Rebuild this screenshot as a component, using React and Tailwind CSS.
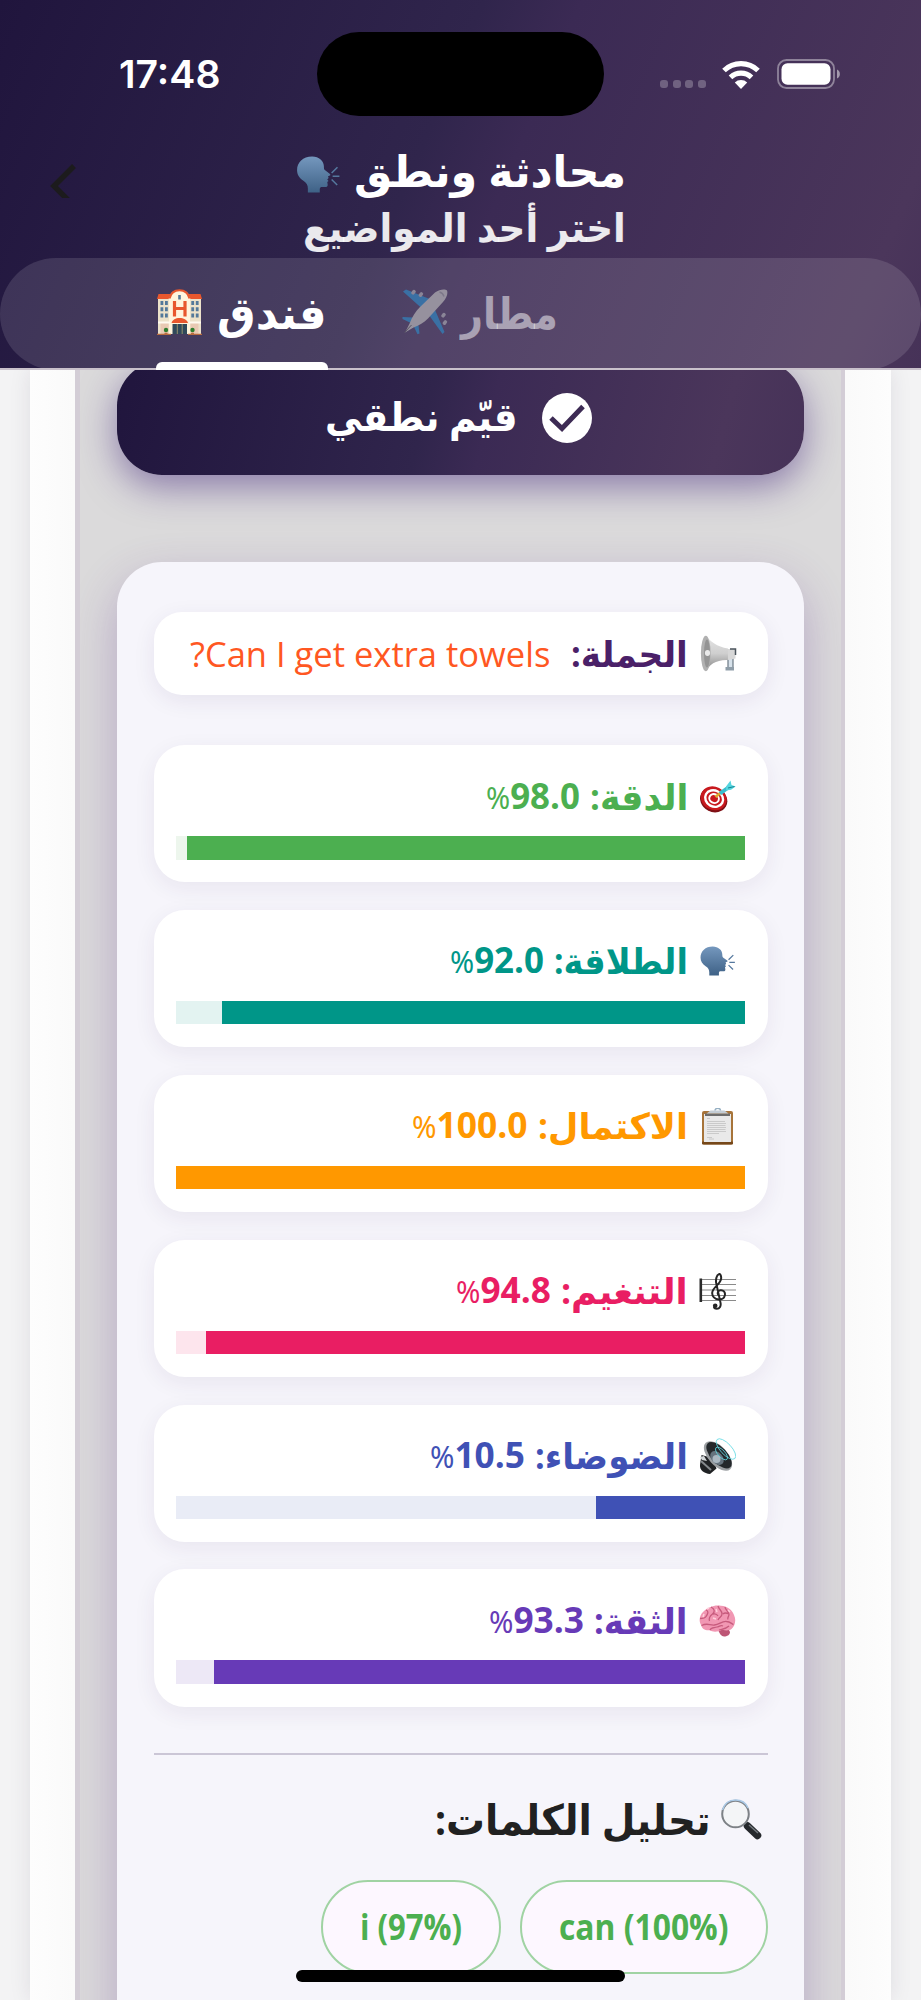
import { useLayoutEffect, useRef } from 'react';
import clsx from 'clsx';

const scores = [
  { icon: 'target', label: 'الدقة:', value: '98.0', labelWidth: 98, valueWidth: 94, fill: 98, text: 'text-[#4caf50]', bar: 'bg-[#4caf50]', track: 'bg-[#edf6ed]' },
  { icon: 'speak', label: 'الطلاقة:', value: '92.0', labelWidth: 134, valueWidth: 94, fill: 92, text: 'text-[#009688]', bar: 'bg-[#009688]', track: 'bg-[#e3f3f1]' },
  { icon: 'clipboard', label: 'الاكتمال:', value: '100.0', labelWidth: 150, valueWidth: 116, fill: 100, text: 'text-[#ff9800]', bar: 'bg-[#ff9800]', track: 'bg-[#fff3e0]' },
  { icon: 'music', label: 'التنغيم:', value: '94.8', labelWidth: 127, valueWidth: 95, fill: 94.8, text: 'text-[#e91e63]', bar: 'bg-[#e91e63]', track: 'bg-[#fde5ed]' },
  { icon: 'speaker', label: 'الضوضاء:', value: '10.5', labelWidth: 153, valueWidth: 95, fill: 26.2, text: 'text-[#3f51b5]', bar: 'bg-[#3f51b5]', track: 'bg-[#e9ecf6]' },
  { icon: 'brain', label: 'الثقة:', value: '93.3', labelWidth: 94, valueWidth: 95, fill: 93.3, text: 'text-[#673ab7]', bar: 'bg-[#673ab7]', track: 'bg-[#ede8f6]' },
];

// Squeezes or stretches one line of text to the given width
const FitText = ({ width, dir = 'rtl', className, children }) => {
  const ref = useRef(null);

  useLayoutEffect(() => {
    const el = ref.current;
    el.style.transform = `scaleX(${width / el.offsetWidth})`;
  }, [width, children]);

  return (
    <span dir={dir} className={clsx('block shrink-0 whitespace-nowrap', className)} style={{ width }}>
      <span
        ref={ref}
        className={clsx('inline-block', dir === 'rtl' ? 'origin-right' : 'origin-left')}
      >
        {children}
      </span>
    </span>
  );
};

const SpeakIcon = ({ className }) => (
  <svg viewBox="0 0 44 38" className={className}>
    <defs>
      <linearGradient id="head" x1="0" y1="0" x2="0" y2="1">
        <stop offset="0" stopColor="#7598be" />
        <stop offset="1" stopColor="#3e6186" />
      </linearGradient>
    </defs>
    <path
      fill="url(#head)"
      d="M16 .5C6.500.5.500 6.500.500 14.500c0 5 2.500 8.500 6.500 11 3.500 2.300 4.600 4.500 4.600 8V37.500h12.200v-3.200c0-2 .8-2.400 3-2.400h2.500c2.200 0 2.900-1 2.600-2.900l-.4-2.200 1.300-1-1.300-1.600 1.400-1.500-.6-2 2-.8c.6-.4.500-.9 0-1.500L29 14.500c-.8-1-1-2-.9-3.300C28.200 5 23 .5 16 .5z"
    />
    <path d="M36 17.500l6-6M37 20.700h7M36 24.200l5.700 5.600" stroke="#55789e" strokeWidth="1.600" fill="none" />
  </svg>
);

const HotelIcon = ({ className }) => (
  <svg viewBox="0 0 45 46" className={className}>
    <path fill="#ece2ca" d="M1 9h43v36H1z" />
    <path fill="#fff4dc" d="M12 9C13 3 18 1 22.500 1S32 3 33 9v36H12z" />
    <path d="M12.500 9.500C14 3 18 1.200 22.500 1.200S31 3 32.500 9.500" fill="none" stroke="#e8572d" strokeWidth="2" />
    <path fill="#e8572d" d="M1.500 5h12l-2 5H0zM31.500 5h12L45 10H33.500z" />
    <path
      fill="#53799a"
      d="M3.500 12h2.800v4H3.500zM8 12h2.800v4H8zM3.500 18.300h2.800v4H3.500zM8 18.300h2.800v4H8zM3.500 24.600h2.800v4H3.500zM8 24.600h2.800v4H8zM34.300 12h2.800v4h-2.800zM38.800 12h2.800v4h-2.800zM34.300 18.300h2.800v4h-2.800zM38.800 18.300h2.800v4h-2.800zM34.300 24.600h2.800v4h-2.800zM38.800 24.600h2.800v4h-2.800zM21.200 6h2.600v4.500h-2.600z"
    />
    <path d="M17.500 12v15.500M28 12v15.500M17.500 19.500H28" stroke="#e8572d" strokeWidth="3.200" />
    <path fill="#e8572d" d="M14.500 34c1-3.500 4-5 8-5s7.500 1.500 8.500 5z" />
    <path fill="#e9c9b3" d="M3.500 34h8v11h-8zM33.500 34h8v11h-8z" />
    <path fill="#30495a" d="M15.500 35h14.500v10H15.500z" />
    <path d="M1 33.500h12M32 33.500h12" stroke="#fffaf0" strokeWidth="2" />
    <path d="M20.300 35v10M25.200 35v10" stroke="#b0a171" strokeWidth=".8" />
    <circle cx="9" cy="41" r="2.200" fill="#2e7d2e" />
    <circle cx="35.500" cy="41" r="2.200" fill="#2e7d2e" />
    <path d="M7.500 44.500h3M34 44.500h3M0 45.500h14M31 45.500h14" stroke="#b86c3f" strokeWidth="1.500" />
  </svg>
);

const PlaneIcon = ({ className }) => (
  <svg viewBox="0 0 46 46" className={className}>
    <path fill="#3a70a4" d="M1 2.500l3-2 25 10 3 8 10.500 24.500-2 2L25.500 24 20 19.500zM.500 28l10.500.500 5 4 1.500 12-2 .8-5-10.500L.500 30z" />
    <g fill="#8a8597">
      <rect x="10" y="1" width="3.500" height="5" rx="1.500" transform="rotate(38 12 3)" />
      <rect x="17.500" y="3" width="3.500" height="5" rx="1.500" transform="rotate(38 19 5)" />
      <rect x="40" y="24" width="3.500" height="5" rx="1.500" transform="rotate(38 42 26)" />
      <rect x="41.500" y="31" width="3.500" height="5" rx="1.500" transform="rotate(38 43 33)" />
    </g>
    <path fill="#96919e" d="M45 1.500c1.200 3-.5 7.500-4 11.500L26 29.500c-4 4-10 7.500-14.500 9L3 43.500l4.500-8.800C10 28 14 22 18 18L33 3.500C37.500.3 43-.5 45 1.500z" />
    <path d="M37.500 3c2 .5 4 2.500 4.500 4.500" fill="none" stroke="#7d7889" strokeWidth="1.300" />
    <path d="M2.500 43.500l7-7.500" stroke="#595564" strokeWidth="1" />
  </svg>
);

const MegaphoneIcon = () => (
  <svg viewBox="0 0 37 37" className="h-[37px] w-[37px]">
    <defs>
      <linearGradient id="horn" x1="0" y1="0" x2="0" y2="1">
        <stop offset="0" stopColor="#e5e5e5" />
        <stop offset=".5" stopColor="#cfcfcf" />
        <stop offset="1" stopColor="#858585" />
      </linearGradient>
    </defs>
    <path d="M28 34V20h5v14z" fill="#d7e2eb" stroke="#6b7884" strokeWidth="1.200" />
    <path d="M25.500 32h8.500v3.500h-8.500z" fill="#8f9da8" />
    <path fill="url(#horn)" d="M6 .8C10 6 17 12 28 13.500v11.500c-12-.5-19 5-22 11z" />
    <path fill="#d7d7d7" d="M28 14l7.500 0v9.500l-7.500 1.500z" />
    <path d="M30 14h5.500v6" stroke="#4b545c" strokeWidth="1.500" fill="none" />
    <ellipse cx="5.800" cy="18.500" rx="4.900" ry="17.700" fill="#b1b1b1" />
    <ellipse cx="7" cy="18.500" rx="3" ry="14" fill="#949494" />
    <ellipse cx="7.500" cy="18" rx="2.600" ry="3" fill="#e9e9e9" />
  </svg>
);

const TargetIcon = () => (
  <svg viewBox="0 0 37 33" className="h-[33px] w-[37px]">
    <g transform="rotate(28 14 20)">
      <ellipse cx="14.500" cy="19.500" rx="14" ry="12.200" fill="#7e1015" />
      <ellipse cx="13.800" cy="18.200" rx="13.300" ry="11.600" fill="#c8191e" />
      <ellipse cx="14.300" cy="18.200" rx="9.200" ry="8" fill="none" stroke="#fff" strokeWidth="2.400" />
      <ellipse cx="14.300" cy="18.200" rx="4.900" ry="4.300" fill="none" stroke="#fff" strokeWidth="2" />
    </g>
    <path d="M16.500 17L23 11.500" stroke="#e0a92e" strokeWidth="2.600" />
    <path d="M21 13.500l9-6.500" stroke="#38bfce" strokeWidth="4" />
    <path fill="#55d5df" d="M27 6.500L31.500.500l1 4.500 4.200 1.500-4.700 3.200-5 .8z" />
    <path d="M29 8l6.500-1.500" stroke="#178493" strokeWidth="1" />
  </svg>
);

const ClipboardIcon = () => (
  <svg viewBox="0 0 37 37" className="h-[37px] w-[37px]">
    <rect x="3" y="3" width="31" height="33.500" rx="2" fill="#a7743a" />
    <rect x="3" y="33.500" width="31" height="3" rx="1" fill="#754719" />
    <path fill="#e9e9e9" d="M5 6h27v28H5z" />
    <path fill="#6d6d6d" d="M6 5.500h25v2.500H6z" />
    <path fill="#c3ccd4" d="M7.500 5.500l4-3h14l4 3z" />
    <path d="M16 2.500c0-3 5.500-3 5.500 0" stroke="#95afc2" strokeWidth="1.400" fill="none" />
    <path d="M8 13.500h18M8 15.500h19M8 17.500h18.500M8 19.500h19M8 21.500h18.500M8 23.500h19M8 25.500h12M8 10.500h3M8 29.500h5M10 31h5" stroke="#cacaca" strokeWidth="1" />
  </svg>
);

const MusicIcon = () => (
  <svg viewBox="0 0 37 37" className="h-[37px] w-[37px]">
    <path d="M2 6.500h35M2 11.500h35M2 17h35M2 22.500h35M2 27.500h35" stroke="#8a8a8a" strokeWidth="1.100" />
    <path d="M1.800 5.500v23.500" stroke="#2a2a2a" strokeWidth="2.600" />
    <path
      d="M20 22.500c-1.800-1-2-4.500 1.200-5.200 3.300-.6 5.200 2 4.700 4.800-.6 3-3.200 4.500-6.200 4.300-4-.2-6.700-3-6.500-6.600.3-5.800 8.800-8.300 9-14.800 0-2.500-1-4.500-2.300-3.900-2.500 1-3.300 6-2.700 9l4.300 19.500c.7 3.500-.8 6.100-3.600 6.200-1.800 0-2.900-1.100-2.900-2.300"
      fill="none"
      stroke="#242424"
      strokeWidth="2"
    />
    <circle cx="16.200" cy="32.700" r="2.300" fill="#242424" />
  </svg>
);

const SpeakerIcon = () => (
  <svg viewBox="0 0 37 37" className="h-[37px] w-[37px]">
    <path fill="#202224" d="M2.500 17l11 3 4 10.500-6.500 5.500C5 35.500.500 32 1 27z" />
    <path d="M2 23l10 9" stroke="#85898c" strokeWidth="2" />
    <path fill="#d2d6d8" d="M1 19l4-1 3 5-5-1z" />
    <ellipse cx="19" cy="18" rx="18" ry="9.500" transform="rotate(47 19 18)" fill="#9b9fa2" />
    <ellipse cx="20" cy="17.200" rx="16.500" ry="8" transform="rotate(47 20 17.200)" fill="#24282b" />
    <ellipse cx="18" cy="20" rx="8" ry="5.500" transform="rotate(47 18 20)" fill="#65737e" />
    <circle cx="17.500" cy="21" r="4" fill="#abb8c2" />
    <g fill="none" stroke="#62d9e3" strokeWidth=".8">
      <ellipse cx="27" cy="11" rx="13" ry="5.500" transform="rotate(47 27 11)" />
      <ellipse cx="22.500" cy="15.500" rx="8" ry="3.500" transform="rotate(47 22.500 15.500)" />
    </g>
  </svg>
);

const BrainIcon = () => (
  <svg viewBox="0 0 37 32" className="h-[32px] w-[37px]">
    <path fill="#bd5575" d="M19 24l9-3 3 6c0 3-3 4.500-6 4.500-2.500 0-5-3-6-7.500z" />
    <path fill="#f197b3" d="M2 20C-.5 16 .500 10 4.500 6.500 9 2 16-.5 22 .800c6 .2 11 4 13 9.200 2.500 5 1 11-2.500 14-3 2-6.500 1.500-9 .5-5 3-10 2.500-13 .7C6 25.500 3 24 2 20z" />
    <path
      d="M2.500 20.500c6-3 8 0 13-.5 5-.3 7-4 12-3.500 4 .2 5 2.500 7 3M7 5c3 1 2 4 0 6.500-1 2-4 2-6 2M12 2c4 2 4 5 1.500 7s-4 4-3 7M19 1c1 4 4 4 4 8 0 3-3 3-4 6M26 2c0 3 4 4 4 7.500 0 2-2 3-1 5M14 9c2-.5 4 0 5 2M24 9c2-2 4-1 6 0M11 25c1-3 4-2 7-3s4-2 6-1M20 25c3-1 7-1 10-4"
      fill="none"
      stroke="#c75b7d"
      strokeWidth="1.300"
    />
    <path d="M10 3l-2 1M17 4l1 3M29 5l2 2M5 9l-1 3M14 13l3 1" stroke="#ffd0dc" strokeWidth="1.500" />
  </svg>
);

const SearchIcon = () => (
  <svg viewBox="0 0 41 41" className="h-[41px] w-[41px]">
    <path d="M22.500 22.500l4 4" stroke="#777" strokeWidth="2.500" />
    <path d="M26.500 27l10 9.500" stroke="#25282c" strokeWidth="7.500" strokeLinecap="round" />
    <path d="M28 26l9 8" stroke="#74797e" strokeWidth="1.500" />
    <circle cx="14.500" cy="15" r="13.300" fill="#f4f5f7" stroke="#7d8186" strokeWidth="2" />
    <path d="M1.500 11C3.500 4 9 1 14.500 1S25 4 27 9" fill="none" stroke="#aac9e6" strokeWidth="1.500" />
  </svg>
);

const icons = {
  target: <TargetIcon />,
  speak: <SpeakIcon className="h-[30px] w-[35px]" />,
  clipboard: <ClipboardIcon />,
  music: <MusicIcon />,
  speaker: <SpeakerIcon />,
  brain: <BrainIcon />,
};

const StatusBar = () => (
  <div className="flex h-[148px] shrink-0 items-center pl-[119px]">
    <FitText dir="ltr" width={101} className="font-[Inter,sans-serif] text-[38px] font-semibold leading-none">
      17:48
    </FitText>
    <div className="ml-[97px] h-[84px] w-[287px] rounded-full bg-black" />
    <div className="ml-[56px] mt-[20px] flex gap-[4.500px]">
      {[0, 1, 2, 3].map((dot) => (
        <span key={dot} className="h-[8px] w-[8px] rounded-[3px] bg-white/25" />
      ))}
    </div>
    <svg viewBox="0 0 38 29" className="ml-[16px] h-[29px] w-[38px] shrink-0">
      <path d="M2 10.500a24.500 24.500 0 0 1 34 0M8.500 17.300a15.300 15.300 0 0 1 21 0" fill="none" stroke="#fff" strokeWidth="5.200" />
      <path fill="#fff" d="M19 29l-6.200-6.400a9 9 0 0 1 12.400 0z" />
    </svg>
    <svg viewBox="0 0 63 30" className="ml-[17px] h-[30px] w-[63px] shrink-0">
      <rect x="1" y="1" width="56" height="28" rx="8.500" fill="none" stroke="#fff" strokeOpacity=".4" strokeWidth="1.800" />
      <rect x="4.500" y="4.300" width="49" height="21.400" rx="6" fill="#fff" />
      <path d="M60 10.500c3.800 1.500 3.800 7.500 0 9z" fill="#fff" fillOpacity=".5" />
    </svg>
  </div>
);

const Header = () => (
  <header className="flex h-[368px] shrink-0 flex-col overflow-hidden bg-[linear-gradient(113deg,#20153d_0%,#30254c_45%,#3b2a54_54%,#4b365b_92%,#463258_100%)] text-white">
    <StatusBar />
    <div className="flex h-[110px] shrink-0">
      <svg viewBox="0 0 30 34" className="ml-[49px] mt-[16px] h-[34px] w-[30px] shrink-0">
        <path d="M25 2L5 22l16 16" fill="none" stroke="#1c1b1d" strokeWidth="5.500" />
      </svg>
      <div dir="rtl" className="ml-[217px] w-[330px]">
        <h1 className="flex h-[51px] items-start font-bold leading-[48px]">
          <FitText width={272} className="-mt-[2px] text-[44px]">محادثة ونطق</FitText>
          <SpeakIcon className="mr-[14px] mt-[8px] h-[37px] w-[44px] shrink-0" />
        </h1>
        <FitText width={323} className="text-[40px] font-bold leading-[56px] text-white/90">
          اختر أحد المواضيع
        </FitText>
      </div>
    </div>
    <nav className="flex h-[112px] shrink-0 gap-[74px] rounded-full bg-white/12 pl-[156px]">
      <div className="flex h-[110px] w-[172px] flex-col justify-between">
        <div className="flex h-[102px] items-center gap-[15px] pt-[6px]">
          <HotelIcon className="ml-[1px] h-[46px] w-[45px] shrink-0" />
          <FitText width={110} className="text-[44px] font-bold leading-[60px]">فندق</FitText>
        </div>
        <div className="h-[6.500px] rounded-t-[6px] bg-white" />
      </div>
      <div className="flex h-[102px] items-center gap-[13px] pt-[6px]">
        <PlaneIcon className="h-[46px] w-[46px] shrink-0" />
        <FitText width={97} className="text-[44px] font-bold leading-[60px] text-white/50">مطار</FitText>
      </div>
    </nav>
  </header>
);

const ScoreCard = ({ score }) => (
  <div className="h-[137.400px] rounded-[31px] bg-white px-[22.500px] pt-[27px] shadow-[0_6px_22px_rgba(50,30,90,0.07)]">
    <div className={clsx('flex h-[49px] items-center pr-[9px] text-[36px] font-bold leading-[47px]', score.text)}>
      <span className="ml-[11px] flex w-[37px] shrink-0 justify-center">{icons[score.icon]}</span>
      <FitText width={score.labelWidth} className="-mt-[1px]">{score.label}</FitText>
      <FitText dir="ltr" width={score.valueWidth} className="-mt-[1px] mr-[10px]">
        <span className="font-['Noto_Sans',sans-serif] text-[30px] font-normal">%</span>
        {score.value}
      </FitText>
    </div>
    <div className={clsx('mt-[15px] h-[23.500px]', score.track)}>
      <div className={clsx('h-full', score.bar)} style={{ width: `${score.fill}%` }} />
    </div>
  </div>
);

const WordChip = ({ width, children }) => (
  <div className="flex h-[94px] items-center justify-center rounded-full border-2 border-[#a0d3a3] bg-[#fdf7ff] px-[37px] text-[35px] font-bold text-[#4caf50]">
    <FitText dir="ltr" width={width}>{children}</FitText>
  </div>
);

export default function App() {
  return (
    <div className="relative flex h-[2000px] w-[921px] flex-col overflow-hidden bg-[#f3f3f4] font-['Open_Sans','DejaVu_Sans',sans-serif]">
      <Header />
      <div className="flex h-[2px] shrink-0 bg-[#c9c1cb] pl-[156px]">
        <div className="w-[172px] bg-white" />
      </div>

      <main className="min-h-0 flex-1 overflow-hidden px-[30px]">
        <div className="h-full bg-[linear-gradient(90deg,#fdfdfd,#fafafa_5%,#fafafa_95%,#fdfdfd)] pl-[45px] pr-[46px] shadow-[0_0_20px_rgba(40,30,70,0.1)]">
          <div dir="rtl" className="h-full overflow-hidden border-l-[5px] border-r-4 border-[#d3cdd6] bg-[#dbdadb] px-[37px]">
            <button className="-mt-[9px] flex h-[114px] w-full items-center rounded-[45px] bg-[linear-gradient(105deg,#20153d_0%,#30254c_45%,#3b2a54_54%,#4b365b_87%,#463258_100%)] pr-[212px] text-white shadow-[0_12px_36px_rgba(60,30,120,0.5)]">
              <svg viewBox="0 0 50 50" className="h-[50px] w-[50px] shrink-0">
                <circle cx="25" cy="25" r="25" fill="#fff" />
                <path d="M9 25l11 10.500 21-22" fill="none" stroke="#3d2b54" strokeWidth="5" />
              </svg>
              <FitText width={193} className="-mt-[5px] mr-[24px] text-[40px] font-bold leading-[60px]">قيّم نطقي</FitText>
            </button>

            <section className="mt-[87px] h-[1500px] rounded-[45px] bg-[#f6f5fb] px-[36.500px] pt-[50px] shadow-[0_18px_46px_rgba(95,50,145,0.3)]">
              <div className="flex h-[83px] items-center rounded-[28px] bg-white pr-[31px] text-[35px] leading-[60px] shadow-[0_6px_22px_rgba(50,30,90,0.08)]">
                <MegaphoneIcon />
                <FitText width={117} className="mr-[12px] text-[36px] font-bold text-[#4a2068]">الجملة:</FitText>
                <FitText width={360} className="mr-[20px] font-normal text-[#ff5722]">Can I get extra towels?</FitText>
              </div>

              <div className="mt-[50px] flex flex-col gap-[27.500px]">
                {scores.map((score) => (
                  <ScoreCard key={score.icon} score={score} />
                ))}
              </div>

              <hr className="mt-[46.500px] border-t-2 border-[#cbc6d6]" />

              <h2 className="mt-[34px] flex h-[60px] items-center pr-[6px] text-[42px] font-bold leading-[60px] text-[#212121]">
                <SearchIcon />
                <FitText width={276} className="mr-[10px]">تحليل الكلمات:</FitText>
              </h2>

              <div className="mt-[31px] flex gap-[18.500px]">
                <WordChip width={170}>can (100%)</WordChip>
                <WordChip width={102}>i (97%)</WordChip>
              </div>
            </section>
          </div>
        </div>
      </main>

      <div className="absolute bottom-[18px] left-[296px] h-[12px] w-[329px] rounded-full bg-black" />
    </div>
  );
}
